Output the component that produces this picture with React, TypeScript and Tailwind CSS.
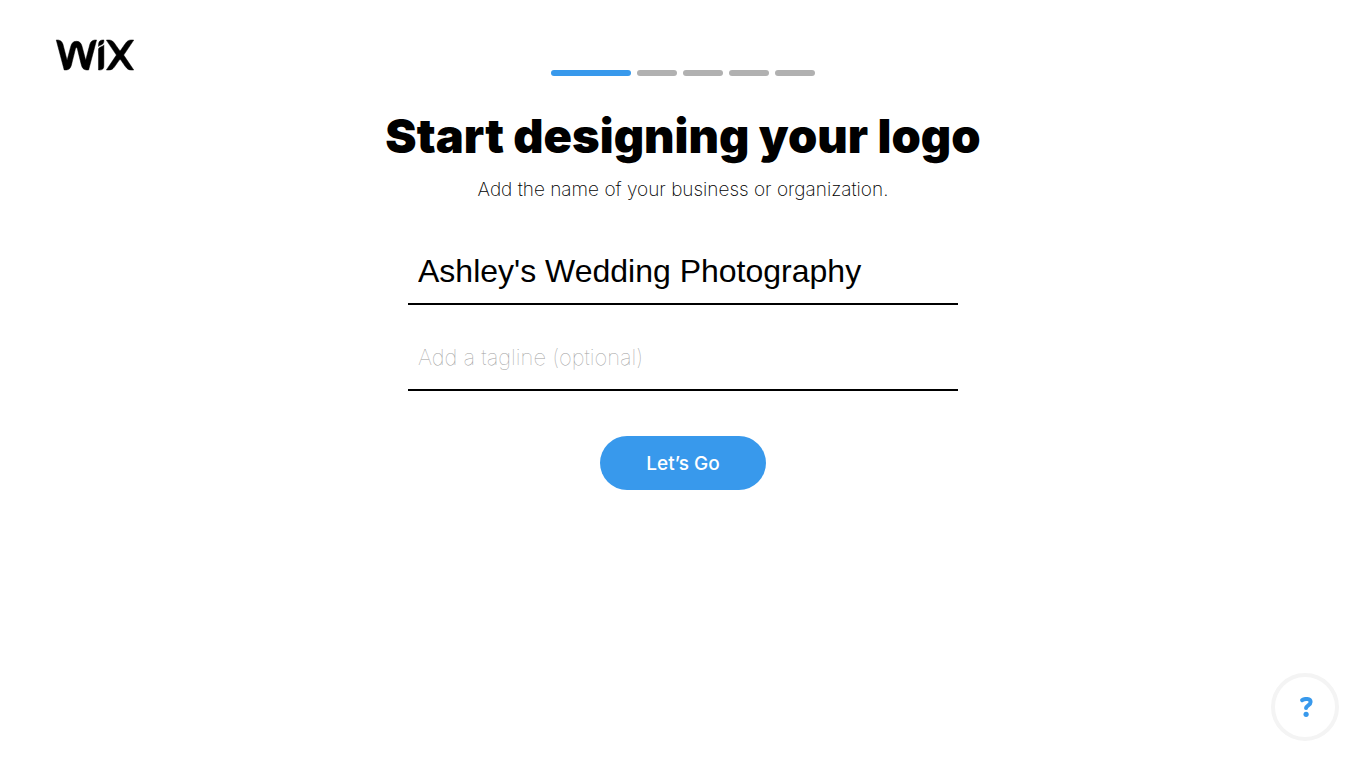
import { useState } from "react";
import { FaWix } from "react-icons/fa";

const STEPS = ["Name", "Industry", "Style", "Usage", "Result"];

function Progress({ current }: { current: number }) {
  return (
    <ol className="flex gap-1.5">
      {STEPS.map((s, i) => (
        <li key={s} className={i === current ? "h-1.5 w-20 rounded-full bg-[#3899ec]" : "h-1.5 w-10 rounded-full bg-[#b1b1b1]"} />
      ))}
    </ol>
  );
}

export default function App() {
  const [name, setName] = useState("Ashley's Wedding Photography");
  const [tagline, setTagline] = useState("");

  return (
    <div className="min-h-screen bg-white font-['Inter','Liberation_Sans',sans-serif] text-black">
      <header className="flex h-[70px] px-14 pt-6">
        <a href="/" aria-label="Wix" className="h-[62px]">
          <FaWix className="h-[62px] w-[78px] overflow-visible stroke-current [stroke-width:4]" />
        </a>
      </header>

      <main className="flex flex-col items-center px-4">
        <Progress current={0} />
        <h1 className="mt-8 text-center text-[47px] leading-14 font-black">Start designing your logo</h1>
        <p className="mt-3 text-center text-[19px] leading-7 font-extralight">Add the name of your business or organization.</p>

        <form onSubmit={e => e.preventDefault()} className="mt-[30px] flex w-full max-w-[550px] flex-col items-center">
          <input value={name} onChange={e => setName(e.target.value)} aria-label="Business name"
            className="h-[71px] w-full border-b-2 border-black px-2.5 pt-1.5 font-['Liberation_Sans',sans-serif] text-[32px] outline-none" />
          <input value={tagline} onChange={e => setTagline(e.target.value)} aria-label="Tagline" placeholder="Add a tagline (optional)"
            className="mt-4 h-[70px] w-full border-b-2 border-black px-2.5 pt-1 text-[22px] font-thin outline-none placeholder:text-[#a0a0a0]" />
          <button type="submit" className="mt-[45px] h-[54px] w-[166px] rounded-full bg-[#3899ec] pt-0.5 text-[19px] font-medium text-white">
            Let’s Go
          </button>
        </form>
      </main>

      <button aria-label="Help" className="fixed right-[27px] bottom-[27px] flex size-[68px] items-center justify-center rounded-full border-4 border-[#f4f4f4] bg-white">
        <svg viewBox="0 0 16 20" className="h-5 w-4" fill="none">
          <path d="M5.2 3.2C7.6 1.4 13.6 1.2 13.6 4.9C13.6 8.2 9.4 8.2 9.1 11" stroke="#3899ec" strokeWidth="4" strokeLinecap="round" />
          <circle cx="9.1" cy="17.3" r="2.6" fill="#3899ec" />
        </svg>
      </button>
    </div>
  );
}
